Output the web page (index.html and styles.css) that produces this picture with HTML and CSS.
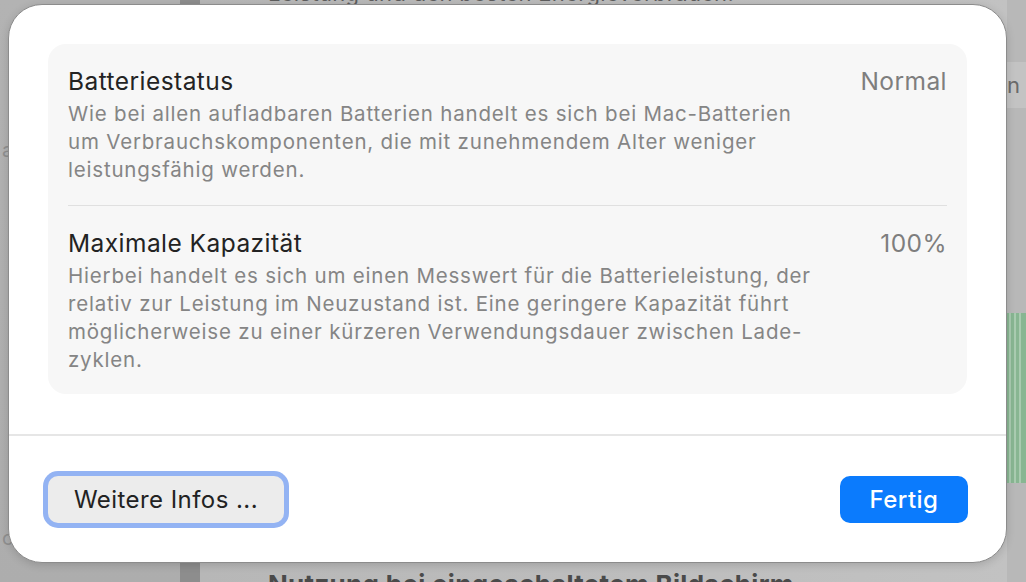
FILE: index.html
```html
<!DOCTYPE html>
<html lang="de">
<head>
    <meta charset="UTF-8">
    <meta name="viewport" content="width=device-width, initial-scale=1.0">
    <title>Batteriezustand</title>
    <link rel="stylesheet" href="styles.css">
</head>
<body>
    <!-- Fenster im Hintergrund (abgedunkelt) -->
    <div class="backdrop">
        <div class="sidebar">
            <span class="side-letter side-a">a</span>
            <span class="side-letter side-c">c</span>
        </div>
        <div class="split"></div>
        <div class="main">
            <p class="top-line">Leistung und den besten Energieverbrauch.</p>
            <div class="spacer"></div>
            <h2 class="bottom-title">Nutzung bei eingeschaltetem Bildschirm</h2>
        </div>
        <div class="edge">
            <div class="edge-band">n 1</div>
            <div class="edge-gap"></div>
            <div class="edge-chart">
                <span></span><span></span><span></span>
            </div>
        </div>
    </div>

    <!-- Sheet: Batteriezustand -->
    <div class="sheet">
        <div class="sheet-body">
            <div class="card">
                <div class="row">
                    <div class="row-head">
                        <span class="row-title">Batteriestatus</span>
                        <span class="row-value">Normal</span>
                    </div>
                    <p class="row-text">Wie bei allen aufladbaren Batterien handelt es sich bei Mac-Batterien<br>um Verbrauchskomponenten, die mit zunehmendem Alter weniger<br>leistungsfähig werden.</p>
                </div>
                <div class="row">
                    <div class="row-head">
                        <span class="row-title">Maximale Kapazität</span>
                        <span class="row-value">100%</span>
                    </div>
                    <p class="row-text">Hierbei handelt es sich um einen Messwert für die Batterieleistung, der<br>relativ zur Leistung im Neuzustand ist. Eine geringere Kapazität führt<br>möglicherweise zu einer kürzeren Verwendungsdauer zwischen Lade-<br>zyklen.</p>
                </div>
            </div>
        </div>
        <div class="sheet-footer">
            <button class="btn btn-focus">Weitere Infos ...</button>
            <button class="btn btn-primary">Fertig</button>
        </div>
    </div>
</body>
</html>
```

FILE: styles.css
```css
* {
    box-sizing: border-box;
}
html, body {
    margin: 0;
    padding: 0;
}
body {
    width: 1026px;
    height: 582px;
    overflow: hidden;
    position: relative;
    font-family: Inter, "Noto Sans", sans-serif;
    background: #b6b6b6;
}

/* Hintergrundfenster */
.backdrop {
    display: flex;
    height: 582px;
}
.sidebar {
    width: 180px;
    background: linear-gradient(180deg, #b3b3b3, #adadad);
    position: relative;
}
.side-letter {
    position: absolute;
    left: 2px;
    color: #8f8f8f;
    font-size: 20px;
}
.side-a { top: 138px; }
.side-c { top: 526px; }
.split {
    width: 20px;
    background: #8d8d8d;
}
.main {
    flex: 1;
    display: flex;
    flex-direction: column;
    background: linear-gradient(90deg, #b7b7b7, #c2c2c2);
}
.top-line {
    margin: -20px 0 0 68px;
    font-size: 22px;
    letter-spacing: 0.3px;
    color: #5e5e5e;
}
.spacer {
    flex: 1;
}
.bottom-title {
    margin: 0 0 -17px 68px;
    font-size: 26px;
    font-weight: 700;
    letter-spacing: 0.3px;
    color: #4a4a4a;
    height: 28px;
    line-height: 28px;
}
.edge {
    width: 19px;
    display: flex;
    flex-direction: column;
    background: #b8b8b8;
}
.edge-band {
    margin-top: 62px;
    height: 46px;
    background: #c3c3c3;
    color: #6a6a6a;
    font-size: 22px;
    padding-top: 10px;
    white-space: nowrap;
    overflow: hidden;
}
.edge-gap {
    height: 205px;
}
.edge-chart {
    height: 170px;
    display: flex;
    gap: 3px;
    background: #88b692;
    padding-left: 2px;
}
.edge-chart span {
    width: 2px;
    background: #a9cbb0;
}

/* Sheet */
.sheet {
    position: absolute;
    left: 8px;
    top: 4px;
    width: 999px;
    height: 559px;
    background: #ffffff;
    border-radius: 34px;
    border: 1px solid #8c8c8c;
    box-shadow: 0 2px 8px rgba(0, 0, 0, 0.15);
    display: flex;
    flex-direction: column;
}
.sheet-body {
    padding: 39px 39px 40px;
    border-bottom: 2px solid #e6e6e6;
}
.card {
    background: #f7f7f7;
    border-radius: 18px;
    padding: 0 20px;
}
.row {
    padding: 23px 0 21px;
}
.row + .row {
    border-top: 1px solid #e0e0e0;
    padding: 23px 0 20px;
}
.row-head {
    display: flex;
    justify-content: space-between;
    align-items: center;
    height: 28px;
    margin-bottom: 5px;
}
.row-title {
    font-size: 24.5px;
    letter-spacing: 0.45px;
    color: #232323;
}
.row-value {
    font-size: 24.5px;
    letter-spacing: 0.45px;
    color: #7e7e7e;
}
.row-text {
    margin: 0;
    font-size: 20.5px;
    letter-spacing: 0.8px;
    line-height: 28px;
    color: #858585;
}

.sheet-footer {
    flex: 1;
    display: flex;
    justify-content: space-between;
    align-items: center;
    padding: 0 38px 0 38px;
}
.btn {
    height: 47px;
    border: none;
    border-radius: 10px;
    font-family: Inter, "Noto Sans", sans-serif;
    font-size: 24px;
    letter-spacing: 0.45px;
    cursor: pointer;
}
.btn-focus {
    width: 236px;
    margin-left: 1px;
    background: #ececec;
    color: #222222;
    box-shadow: 0 0 0 5px #93b3f3;
}
.btn-primary {
    width: 128px;
    background: #0b7bfd;
    color: #ffffff;
    font-weight: 500;
}
```
